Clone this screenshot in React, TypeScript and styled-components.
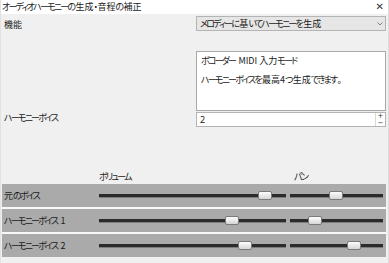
import React from "react";
import styled, { createGlobalStyle } from "styled-components";

const Global = createGlobalStyle`
  html, body { margin: 0; padding: 0; background: #f0f0f0; }
  body {
    font-family: "Noto Sans CJK JP", "Noto Sans", sans-serif;
    font-feature-settings: "palt";
    font-size: 9px;
    color: #1a1a1a;
  }
`;

const Kana = styled.span`
  letter-spacing: -1.8px;
  padding-right: 1.2px;
`;

const KANA_RUN = /([\u3040-\u30ff]+)/;
const KANA_ONLY = /^[\u3040-\u30ff]+$/;

function JP({ text }: { text: string }) {
  const parts = text.split(KANA_RUN);
  return (
    <>
      {parts.map((p, i) =>
        KANA_ONLY.test(p) ? <Kana key={i}>{p}</Kana> : <React.Fragment key={i}>{p}</React.Fragment>
      )}
    </>
  );
}

const Window = styled.div`
  width: 389px;
  height: 263px;
  box-sizing: border-box;
  background: #f0f0f0;
  border-left: 1px solid #e2e2e2;
  border-right: 1px solid #dcdcdc;
  display: flex;
  flex-direction: column;
  overflow: hidden;
`;

const TitleBar = styled.div`
  height: 14px;
  background: #ffffff;
  display: flex;
  align-items: center;
  justify-content: space-between;
  padding: 0 4px 0 1px;
  line-height: 14px;
  flex-shrink: 0;
`;

const Close = styled.span`
  font-family: "DejaVu Sans", sans-serif;
  font-size: 10px;
  color: #333;
`;

const Form = styled.div`
  display: grid;
  grid-template-columns: 192px 190px;
  padding: 2px 0 0 3px;
`;

const Label = styled.div<{ $mt?: number }>`
  line-height: 12px;
  margin-top: ${(p) => p.$mt ?? 0}px;
`;

const Select = styled.div`
  height: 15px;
  box-sizing: border-box;
  border: 1px solid #b4b4b4;
  background: #e6e6e6;
  display: flex;
  align-items: center;
  justify-content: space-between;
  padding: 0 2px 0 3px;
  line-height: 13px;
`;

const Chevron = styled.svg`
  width: 6px;
  height: 4px;
`;

const Description = styled.div`
  grid-column: 2;
  margin-top: 20px;
  height: 60px;
  box-sizing: border-box;
  background: #fff;
  border: 1px solid #a8a8a8;
  padding: 3px 4px;
  line-height: 12px;
  display: flex;
  flex-direction: column;
  gap: 7px;
`;

const Spin = styled.div`
  margin-top: 1px;
  height: 15px;
  box-sizing: border-box;
  border: 1px solid #b4b4b4;
  background: #fff;
  display: flex;
`;

const SpinValue = styled.div`
  flex: 1;
  padding-left: 3px;
  line-height: 13px;
  font-family: "Noto Sans", sans-serif;
`;

const SpinButtons = styled.div`
  width: 9px;
  border-left: 1px solid #d8d8d8;
  display: flex;
  flex-direction: column;
`;

const SpinButton = styled.div`
  height: 6.5px;
  overflow: hidden;
  font-family: "DejaVu Sans", sans-serif;
  font-size: 7px;
  line-height: 6.5px;
  text-align: center;
  color: #333;
`;

const Mixer = styled.div`
  margin-top: 44px;
  padding: 0 2px 0 1px;
  display: flex;
  flex-direction: column;
`;

const Headers = styled.div`
  display: grid;
  grid-template-columns: 97px 191px 92px;
  height: 12px;
  line-height: 12px;
  margin-bottom: 1px;
`;

const HeaderCell = styled.div<{ $pad: number }>`
  padding-left: ${(p) => p.$pad}px;
`;

const Rows = styled.div`
  display: flex;
  flex-direction: column;
  gap: 2px;
  background: #f8f8f8;
`;

const Row = styled.div`
  display: grid;
  grid-template-columns: 97px 191px 93px;
  align-items: center;
  height: 23px;
  background: #aaaaaa;
  color: #1a1a1a;
`;

const RowLabel = styled.div`
  padding-left: 2px;
  line-height: 12px;
`;

const Track = styled.div<{ $right?: number }>`
  position: relative;
  height: 3px;
  background: #2b2b2b;
  border-bottom: 1px solid #7d7d7d;
  margin-right: ${(p) => p.$right ?? 0}px;
`;

const Thumb = styled.div`
  position: absolute;
  top: -3px;
  width: 14px;
  height: 9px;
  box-sizing: border-box;
  border: 1px solid #7a7a7a;
  border-radius: 2px;
  background: linear-gradient(#fdfdfd, #d6d6d6);
  transform: translateX(-50%);
`;

const rows = [
  { name: "元のボイス", vol: 166, pan: 46 },
  { name: "ハーモニーボイス 1", vol: 133, pan: 25 },
  { name: "ハーモニーボイス 2", vol: 146, pan: 64 },
];

export default function App() {
  return (
    <>
      <Global />
      <Window>
        <TitleBar>
          <span><JP text="オーディオハーモニーの生成・音程の補正" /></span>
          <Close>✕</Close>
        </TitleBar>
        <Form>
          <Label $mt={3}>機能</Label>
          <Select>
            <span><JP text="メロディーに基いてハーモニーを生成" /></span>
            <Chevron viewBox="0 0 6 4">
              <path d="M0.5 0.5 L3 3 L5.5 0.5" fill="none" stroke="#777" strokeWidth="0.9" />
            </Chevron>
          </Select>
          <Description>
            <span><JP text="ボコーダー MIDI 入力モード" /></span>
            <span><JP text="ハーモニーボイスを最高4つ生成できます。" /></span>
          </Description>
          <Label $mt={1}><JP text="ハーモニーボイス" /></Label>
          <Spin>
            <SpinValue>2</SpinValue>
            <SpinButtons>
              <SpinButton>+</SpinButton>
              <SpinButton>−</SpinButton>
            </SpinButtons>
          </Spin>
        </Form>
        <Mixer>
          <Headers>
            <div />
            <HeaderCell $pad={0}><JP text="ボリューム" /></HeaderCell>
            <HeaderCell $pad={4}><JP text="パン" /></HeaderCell>
          </Headers>
          <Rows>
            {rows.map((r) => (
              <Row key={r.name}>
                <RowLabel><JP text={r.name} /></RowLabel>
                <Track $right={4}>
                  <Thumb style={{ left: r.vol }} />
                </Track>
                <Track>
                  <Thumb style={{ left: r.pan }} />
                </Track>
              </Row>
            ))}
          </Rows>
        </Mixer>
      </Window>
    </>
  );
}
